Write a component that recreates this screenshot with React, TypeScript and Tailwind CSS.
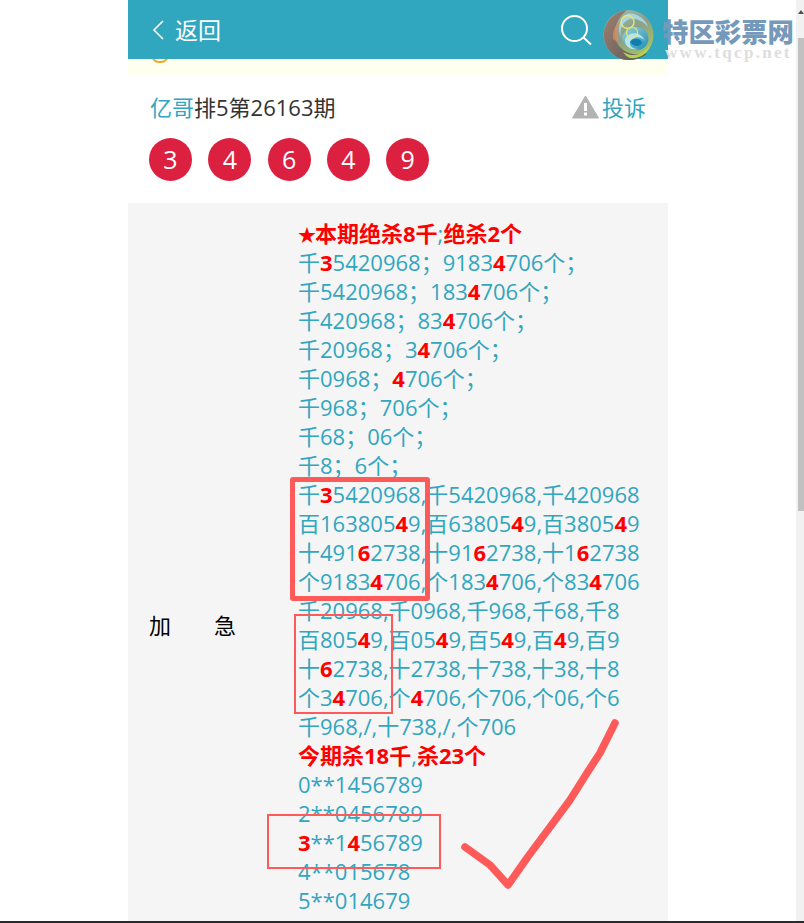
import React from "react";

const F = { fontFamily: '"Open Sans","Noto Sans CJK SC",sans-serif' };

function R({ children }: { children: React.ReactNode }) {
  return <b className="font-bold text-[#ff0000]">{children}</b>;
}

const rows: React.ReactNode[] = [
  <span className="font-bold text-[#ff0000]"><span className="inline-block w-[17px] text-[18px] leading-[20px]">★</span>本期绝杀8千<span className="font-normal text-[#31a6bf]">;</span>绝杀2个</span>,
  <>千<R>3</R>5420968；9183<R>4</R>706个；</>,
  <>千5420968；183<R>4</R>706个；</>,
  <>千420968；83<R>4</R>706个；</>,
  <>千20968；3<R>4</R>706个；</>,
  <>千0968；<R>4</R>706个；</>,
  <>千968；706个；</>,
  <>千68；06个；</>,
  <>千8；6个；</>,
  <>千<R>3</R>5420968,千5420968,千420968</>,
  <>百163805<R>4</R>9,百63805<R>4</R>9,百3805<R>4</R>9</>,
  <>十491<R>6</R>2738,十91<R>6</R>2738,十1<R>6</R>2738</>,
  <>个9183<R>4</R>706,个183<R>4</R>706,个83<R>4</R>706</>,
  <>千20968,千0968,千968,千68,千8</>,
  <>百805<R>4</R>9,百05<R>4</R>9,百5<R>4</R>9,百<R>4</R>9,百9</>,
  <>十<R>6</R>2738,十2738,十738,十38,十8</>,
  <>个3<R>4</R>706,个<R>4</R>706,个706,个06,个6</>,
  <>千968,/,十738,/,个706</>,
  <span className="font-bold text-[#ff0000]">今期杀18千<span className="font-normal text-[#31a6bf]">,</span>杀23个</span>,
  <>0**1456789</>,
  <>2**0456789</>,
  <><R>3</R>**1<R>4</R>56789</>,
  <>4**015678</>,
  <>5**014679</>,
];

function Logo() {
  return (
    <div className="absolute left-[603px] top-[9px] flex w-[193px] gap-[8px]">
      <svg width="51" height="52" viewBox="0 0 51 52" className="shrink-0">
        <defs>
          <linearGradient id="base" x1="0.2" y1="0.1" x2="0.8" y2="0.95">
            <stop offset="0%" stopColor="#9ab8a8" />
            <stop offset="45%" stopColor="#8c9f8a" />
            <stop offset="100%" stopColor="#a6c75c" />
          </linearGradient>
          <linearGradient id="brown" x1="0" y1="0" x2="1" y2="1">
            <stop offset="0%" stopColor="#a0806e" />
            <stop offset="100%" stopColor="#5c5a5a" />
          </linearGradient>
          <linearGradient id="sw" x1="0" y1="0" x2="1" y2="1">
            <stop offset="0%" stopColor="#9fd2d8" />
            <stop offset="100%" stopColor="#1d8fb8" />
          </linearGradient>
        </defs>
        <circle cx="25.5" cy="26" r="25" fill="url(#base)" />
        <path d="M24 1 C10 3 1 14 1 26 C1 39 11 50 24 51 C34 51.5 41 48 44 44 C36 47 24 46 17 38 C9 29 10 12 24 1Z" fill="url(#brown)" />
        <path d="M24 5 C32 3 42 9 45 18 C40 12 33 9 27 10 C20 12 16 20 18 28 C14 20 16 9 24 5Z" fill="#a9d5dc" />
        <path d="M19 28 C21 40 33 45 42 38 C48 32 46 22 38 19 C30 16 22 19 19 28Z" fill="url(#sw)" />
        <path d="M22 30 C26 22 38 22 42 32 C38 27 30 27 27 33 C26 37 30 40 35 40 C28 42 21 37 22 30Z" fill="#b8e4ea" />
        <path d="M27 33 C30 28 38 29 39 34 C37 38 30 38 27 33Z" fill="#0e7fae" />
        <path d="M10 30 C9 20 14 14 18 12 C14 18 13 26 16 34Z" fill="#d98a62" opacity="0.75" />
        <path d="M20 43 C30 49 40 46 47 36 C45 45 36 50 27 49 C24 48 22 46 20 43Z" fill="#b5d24e" />
        <circle cx="24.5" cy="13" r="6.5" fill="none" stroke="#e8e86e" strokeWidth="1.4" />
        <circle cx="29" cy="23.5" r="5.5" fill="none" stroke="#e8e86e" strokeWidth="1.2" />
      </svg>
      <div className="flex flex-col whitespace-nowrap pt-[8px]">
        <div className="h-[27px] text-[26.4px] leading-[27px] font-black text-[#7499bb]" style={{ fontFamily: '"Noto Sans CJK SC",sans-serif' }}>特区彩票网</div>
        <div className="ml-[3px] h-[17px] text-[17px] leading-[17px] font-bold tracking-[2.3px] text-[#dedede]" style={{ fontFamily: '"Liberation Serif",serif' }}>www.tqcp.net</div>
      </div>
    </div>
  );
}

export default function App() {
  return (
    <div className="relative flex h-[923px] w-[804px] flex-col overflow-hidden bg-white" style={F}>
      <div className="flex min-h-0 flex-1">
        <main className="ml-[128px] w-[540px]">
          <header className="flex h-[59px] items-center bg-[#31a6bf] pl-[24px] pr-[76px] text-white">
            <svg width="12" height="22" viewBox="0 0 12 22" fill="none" stroke="white" strokeWidth="1.6"><path d="M11 2 L2 11 L11 20" /></svg>
            <span className="ml-[11px] text-[23px] leading-[32px]">返回</span>
            <svg className="ml-auto" width="32" height="32" viewBox="0 0 32 32" fill="none" stroke="white" strokeWidth="2"><circle cx="14.5" cy="14.5" r="12.5" /><path d="M23.5 23.5 L31 30.5" /></svg>
          </header>
          <div className="relative h-[17px] overflow-hidden bg-[#fffff0]">
            <div className="absolute left-[23px] top-[-12px] h-[16px] w-[18px] rounded-full border-2 border-[#f5a623]" />
          </div>
          <div className="flex h-[50px] items-center justify-between pl-[22px] pr-[22px] pt-[12px]">
            <div className="text-[22px] leading-[32px] text-[#333333]"><span className="text-[#31a6bf]">亿哥</span>排5第26163期</div>
            <div className="flex items-center text-[22px] leading-[32px] text-[#31a6bf]">
              <svg width="27" height="24" viewBox="0 0 27 24" className="mr-[3px]"><path d="M13.5 1 L26.5 23 L0.5 23 Z" fill="#b3b3b3" stroke="#b3b3b3" strokeLinejoin="round" strokeWidth="1" /><rect x="12" y="8" width="3" height="8" fill="white" /><rect x="12" y="17.5" width="3" height="3" fill="white" /></svg>
              投诉
            </div>
          </div>
          <div className="flex gap-[16.3px] pb-[22px] pl-[21px] pt-[12px]">
            {[3, 4, 6, 4, 9].map((n, i) => (
              <div key={i} className="flex h-[43px] w-[43px] items-center justify-center rounded-full bg-[#dc2040] text-[25px] text-white">{n}</div>
            ))}
          </div>
          <div className="flex h-[845px] bg-[#f5f5f5] pt-[16px] text-[22px] leading-[29px]">
            <div className="flex w-[170px] shrink-0 items-center self-stretch pb-[16px] pl-[21px] text-black">
              <span className="w-[65px]">加</span><span>急</span>
            </div>
            <div className="whitespace-nowrap text-[#31a6bf]">
              {rows.map((r, i) => <div key={i} className="h-[29px]">{r}</div>)}
            </div>
          </div>
        </main>
        <aside className="ml-auto w-[8px] bg-[#f1f1f1] pl-[2px]">
          <div className="flex h-[38px] items-start justify-end pt-[10px]">
            <div className="h-0 w-0 border-x-[3px] border-b-[4px] border-x-transparent border-b-[#505050]" />
          </div>
          <div className="h-[473px] bg-[#c1c1c1]" />
        </aside>
      </div>
      <div className="h-[2px] bg-[#2a2a2c]" />
      <Logo />
      <div className="absolute left-[290px] top-[477px] h-[124px] w-[140px] rounded-[3px] border-[5px] border-[#ff5a5a]" />
      <div className="absolute left-[294px] top-[614px] h-[100px] w-[99px] border-2 border-[#ff5a5a]" />
      <div className="absolute left-[267px] top-[814px] h-[55px] w-[174px] border-2 border-[#ff5a5a]" />
      <svg className="absolute left-[455px] top-[712px]" width="170" height="180" viewBox="0 0 170 180" fill="none" stroke="#ff5a5a" strokeWidth="7.5" strokeLinecap="round" strokeLinejoin="round">
        <path d="M10 135 L35 153 L53 173 L72 146 L98 111 L115 88 L132 61 L145 41 L160 11" />
      </svg>
    </div>
  );
}
